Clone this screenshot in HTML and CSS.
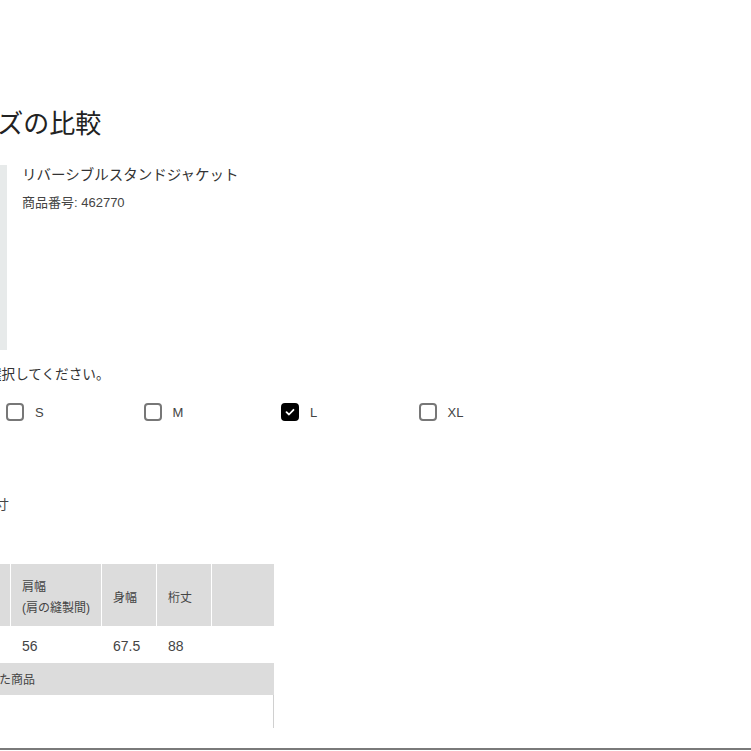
FILE: index.html
```html
<!DOCTYPE html>
<html lang="ja">
  <head>
    <meta charset="UTF-8" />
    <meta name="viewport" content="width=device-width, initial-scale=1.0" />
    <title>サイズの比較</title>
    <link rel="stylesheet" href="styles.css">
  </head>
  <body>
    <div class="page">
      <h1 class="title">サイズの比較</h1>

      <div class="product">
        <div class="product-img"></div>
        <div class="product-info">
          <div class="product-name">リバーシブルスタンドジャケット</div>
          <div class="product-code">商品番号: 462770</div>
        </div>
      </div>

      <p class="select-text">サイズを選択してください。</p>

      <div class="sizes">
        <label class="size"><span class="box"></span>S</label>
        <label class="size"><span class="box"></span>M</label>
        <label class="size">
          <span class="box checked">
            <svg width="12" height="12" viewBox="0 0 12 12">
              <path d="M2.5 6.2 L5 8.5 L9.5 3.8" fill="none" stroke="#fff" stroke-width="1.8" stroke-linecap="round" stroke-linejoin="round" />
            </svg>
          </span>L
        </label>
        <label class="size"><span class="box"></span>XL</label>
      </div>

      <p class="note">商品の実寸</p>

      <div class="size-table">
        <div class="th">サイズ</div>
        <div class="th">肩幅<br />(肩の縫製間)</div>
        <div class="th">身幅</div>
        <div class="th">桁丈</div>
        <div class="th"></div>

        <div class="td">L</div>
        <div class="td">56</div>
        <div class="td">67.5</div>
        <div class="td">88</div>
        <div class="td"></div>

        <div class="row-title">最近見た商品</div>
        <div class="row-empty"></div>
      </div>
    </div>
    <div class="bottom-line"></div>
  </body>
</html>
```

FILE: styles.css
```css
html,
body {
  margin: 0;
  overflow: hidden;
}
body {
  font-family: "Liberation Sans", "Noto Sans CJK JP", sans-serif;
  color: #333;
  background: #fff;
  height: 751px;
}
.page {
  margin-left: -52px;
  padding-top: 103px;
}
.title {
  margin: 0 0 0 -2px;
  font-family: "Noto Sans CJK JP", sans-serif;
  font-size: 26px;
  font-weight: normal;
  line-height: 38px;
  color: #222;
}

.product {
  display: flex;
  margin-top: 24px;
}
.product-img {
  width: 59px;
  height: 185px;
  background-color: #e7eaea;
}
.product-info {
  margin-left: 15px;
}
.product-name {
  font-size: 14.5px;
  line-height: 22px;
  margin-top: -1px;
  color: #333;
}
.product-code {
  font-size: 13px;
  line-height: 18px;
  margin-top: 8px;
  color: #444;
}

.select-text {
  margin: 15px 0 0 -14px;
  font-size: 13.6px;
  line-height: 20px;
  color: #333;
}

.sizes {
  display: flex;
  margin-top: 17px;
  margin-left: 58px;
}
.size {
  width: 137.5px;
  display: flex;
  align-items: center;
  font-size: 13px;
  color: #444;
  height: 20px;
}
.box {
  width: 18px;
  height: 18px;
  box-sizing: border-box;
  border: 2px solid #777;
  border-radius: 4px;
  margin-right: 11px;
  display: flex;
  align-items: center;
  justify-content: center;
}
.box.checked {
  background-color: #000;
  border-color: #000;
}

.note {
  margin: 73px 0 0 -4px;
  font-size: 13px;
  line-height: 20px;
  color: #444;
}

.size-table {
  display: grid;
  grid-template-columns: 62px 90px 54px 54px 62px;
  column-gap: 1px;
  margin-top: 49px;
  font-size: 12px;
}
.th {
  background-color: #dcdcdc;
  height: 62px;
  box-sizing: border-box;
  padding: 6px 0 0 11px;
  display: flex;
  align-items: center;
  line-height: 21px;
  color: #444;
}
.td {
  height: 37px;
  box-sizing: border-box;
  padding: 4px 0 0 11px;
  display: flex;
  align-items: center;
  font-size: 14px;
  color: #444;
  border-bottom: 1px solid #fff;
}
.row-title {
  grid-column: 1 / -1;
  background-color: #dcdcdc;
  height: 32px;
  box-sizing: border-box;
  padding: 0 0 2px 15px;
  display: flex;
  align-items: center;
  color: #444;
}
.row-empty {
  grid-column: 1 / -1;
  height: 33px;
  border-right: 1px solid #d0d0d0;
}

.bottom-line {
  margin-top: 20px;
  height: 2px;
  background-color: #7a7a7a;
}
```
